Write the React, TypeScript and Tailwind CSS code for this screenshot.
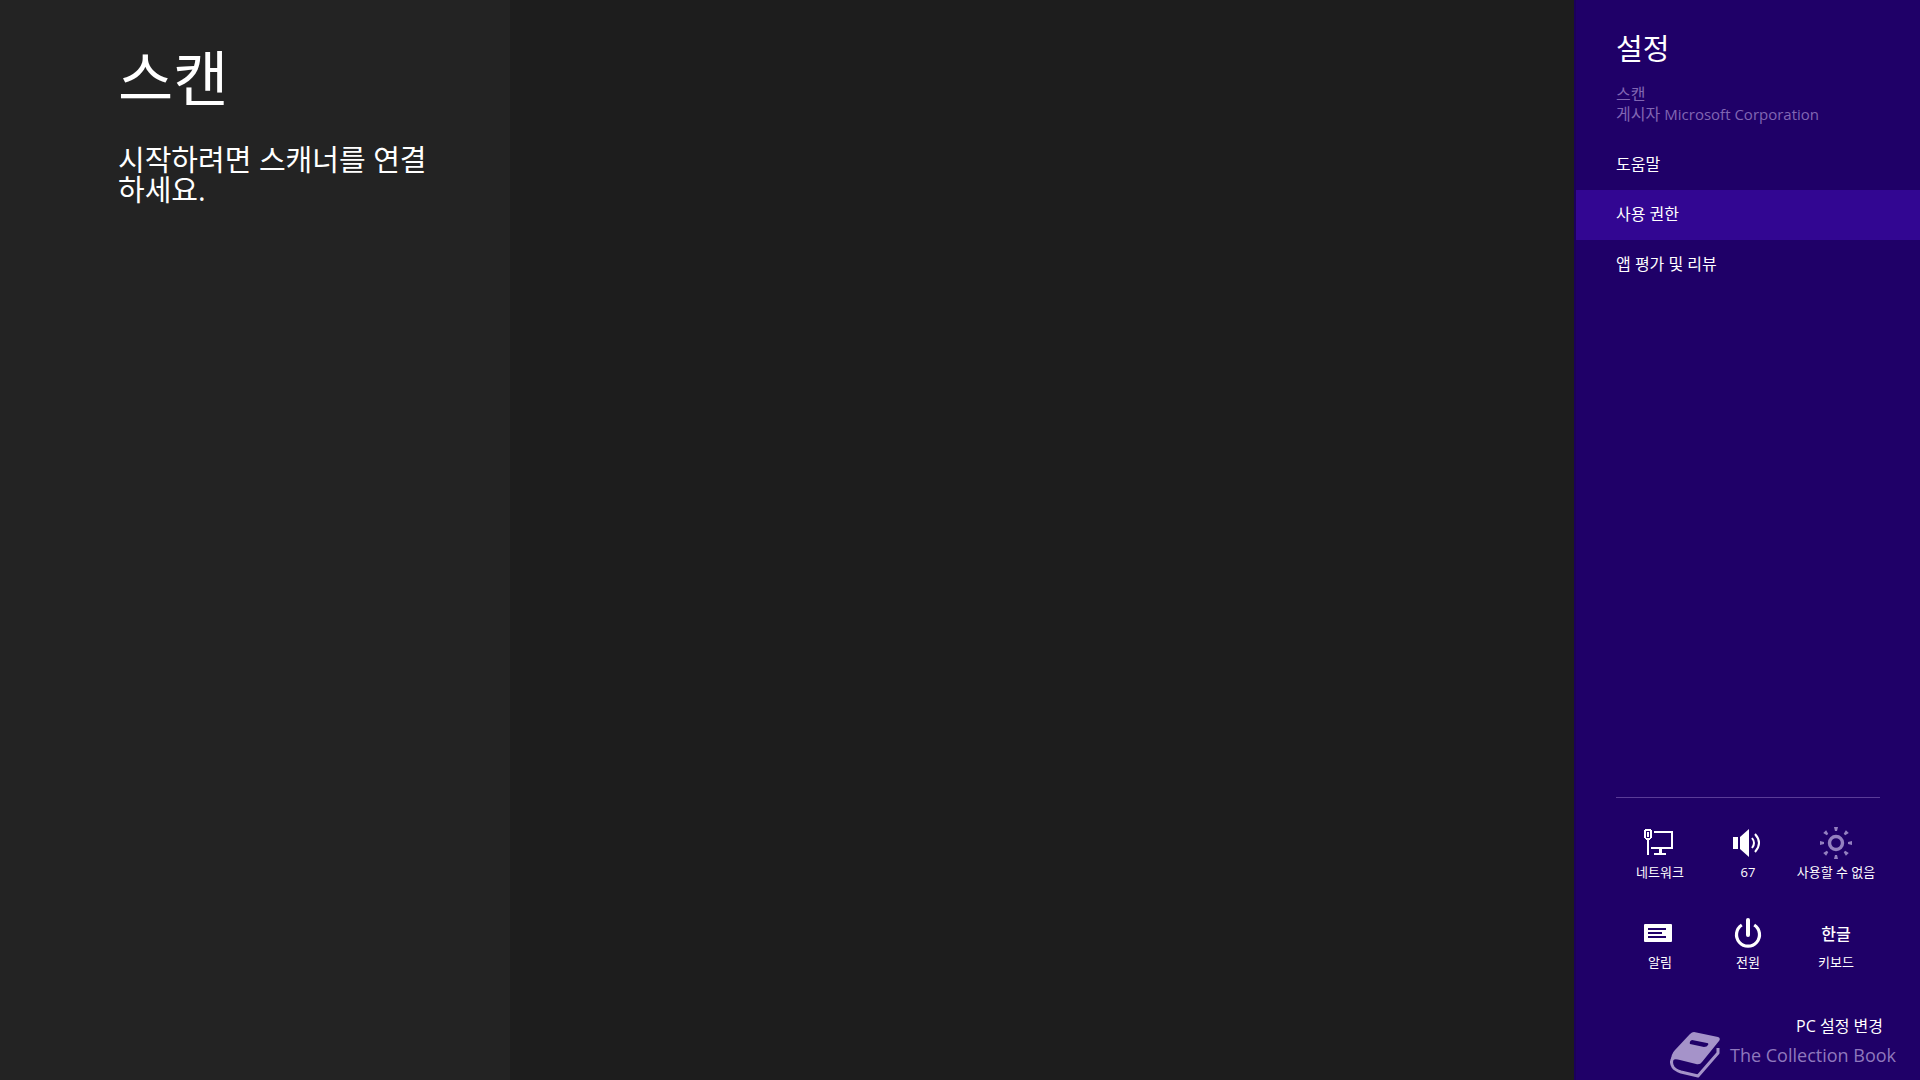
import type { ReactNode } from "react";

const menuItems = [
  { id: "help", label: "도움말" },
  { id: "permissions", label: "사용 권한", active: true },
  { id: "rate", label: "앱 평가 및 리뷰" },
];

function NetworkIcon() {
  return (
    <svg viewBox="0 0 40 40" className="w-10 h-10" fill="currentColor" shapeRendering="crispEdges">
      <path fillRule="evenodd" d="M5 6h6v1h1v8h-1v1h-1v1H6v-1H5v-1H4V7h1zM6 8v7h4V8z" />
      <rect x="7" y="9" width="2" height="5" />
      <rect x="7" y="17" width="2" height="15" />
      <path d="M14 8h19v18H11v-2h20V10H14z" />
      <rect x="19" y="26" width="3" height="4" />
      <rect x="14" y="30" width="12" height="2" />
    </svg>
  );
}

function VolumeIcon() {
  return (
    <svg viewBox="0 0 40 40" className="w-10 h-10" fill="currentColor">
      <rect x="5" y="14" width="5" height="12" />
      <path d="M12 14L21 6v28l-9-8z" />
      <path d="M24 15q4 5 0 10" fill="none" stroke="currentColor" strokeWidth="2" />
      <path d="M27 11q8 9 0 18" fill="none" stroke="currentColor" strokeWidth="2" />
    </svg>
  );
}

function BrightnessIcon() {
  return (
    <svg viewBox="0 0 40 40" className="w-10 h-10 text-[#9480c0]" fill="currentColor">
      <circle cx="20" cy="20" r="6.5" fill="none" stroke="currentColor" strokeWidth="3.4" />
      {[0, 45, 90, 135, 180, 225, 270, 315].map((angle) => (
        <path key={angle} d="M18 4h4l-1 4h-2z" transform={`rotate(${angle} 20 20)`} />
      ))}
    </svg>
  );
}

function NotificationsIcon() {
  return (
    <svg viewBox="0 0 40 40" className="w-10 h-10" fill="currentColor">
      <rect x="4" y="11" width="28" height="18" rx="1" />
      <path d="M8 15h18v2H8zM8 19h14v2H8zM8 23h18v2H8z" fill="#1f0068" />
    </svg>
  );
}

function PowerIcon() {
  return (
    <svg viewBox="0 0 40 40" className="w-10 h-10" fill="none" stroke="currentColor">
      <path d="M13.8 12A11.5 11.5 0 1 0 26.2 12" strokeWidth="3.2" />
      <path d="M20 7v15" strokeWidth="4" strokeLinecap="round" />
    </svg>
  );
}

function BookIcon() {
  return (
    <svg viewBox="0 0 50 46" className="w-[50px] h-[46px]" fill="currentColor">
      <path
        fillRule="evenodd"
        d="M24 0L48 5Q51 6 49 9L32 30Q30 33 26 32L10 28Q4 26 1 29Q1 22 5 18L20 2Q22 0 24 0ZM22 8Q19 9 20 12L34 15Q37 15 38 13Q39 11 37 11Z"
      />
      <path
        d="M3 26Q0 30 3 35Q5 38 11 40L28 44L48 21V16"
        fill="none"
        stroke="currentColor"
        strokeWidth="3"
        strokeLinejoin="round"
      />
    </svg>
  );
}

function QuickSetting({ icon, label }: { icon: ReactNode; label: string }) {
  return (
    <button type="button" className="flex flex-col items-center h-[90px] whitespace-nowrap">
      <span className="flex items-center justify-center h-10">{icon}</span>
      <span className="text-[13px] leading-[18px]">{label}</span>
    </button>
  );
}

export default function App() {
  return (
    <div className="flex min-h-screen bg-[#1d1d1d] text-white font-['Open_Sans','Noto_Sans_CJK_KR',sans-serif]">
      <section className="w-[510px] shrink-0 bg-[#232323] pl-[118px] pr-[60px] pt-[39px]">
        <h1 className="text-[60px] leading-[78px]">스캔</h1>
        <p className="mt-7 text-[29px] leading-[30px]">시작하려면 스캐너를 연결하세요.</p>
      </section>

      <main className="flex-1" />

      <aside className="relative flex flex-col w-[346px] shrink-0 bg-[#1f0068] border-l-2 border-[#1b005c]">
        <header className="px-10 pt-7">
          <h2 className="text-[29px] leading-[42px]">설정</h2>
          <div className="mt-[14px] text-base leading-5 text-[#8166b3]">
            <p>스캔</p>
            <p>
              게시자 <span className="text-[15px]">Microsoft Corporation</span>
            </p>
          </div>
        </header>

        <nav className="mt-4 flex flex-col">
          {menuItems.map((item) => (
            <button
              key={item.id}
              type="button"
              className={`h-[50px] px-10 pb-[2px] text-left text-base ${item.active ? "bg-[#320692]" : ""}`}
            >
              {item.label}
            </button>
          ))}
        </nav>

        <div className="mt-auto mx-10 border-t border-[#5a3c98] pt-[25px] grid grid-cols-3">
          <QuickSetting icon={<NetworkIcon />} label="네트워크" />
          <QuickSetting icon={<VolumeIcon />} label="67" />
          <QuickSetting icon={<BrightnessIcon />} label="사용할 수 없음" />
          <QuickSetting icon={<NotificationsIcon />} label="알림" />
          <QuickSetting icon={<PowerIcon />} label="전원" />
          <QuickSetting icon={<span className="pt-[2px] text-base font-medium">한글</span>} label="키보드" />
        </div>

        <a href="#pc-settings" className="self-end mt-[13px] mr-[37px] mb-11 text-base leading-5">
          PC 설정 변경
        </a>

        <div className="absolute right-6 bottom-[2px] flex items-center gap-[10px] text-[#a593c9] pointer-events-none">
          <BookIcon />
          <span className="text-lg leading-6 whitespace-nowrap text-[#8f78bd]">The Collection Book</span>
        </div>
      </aside>
    </div>
  );
}
